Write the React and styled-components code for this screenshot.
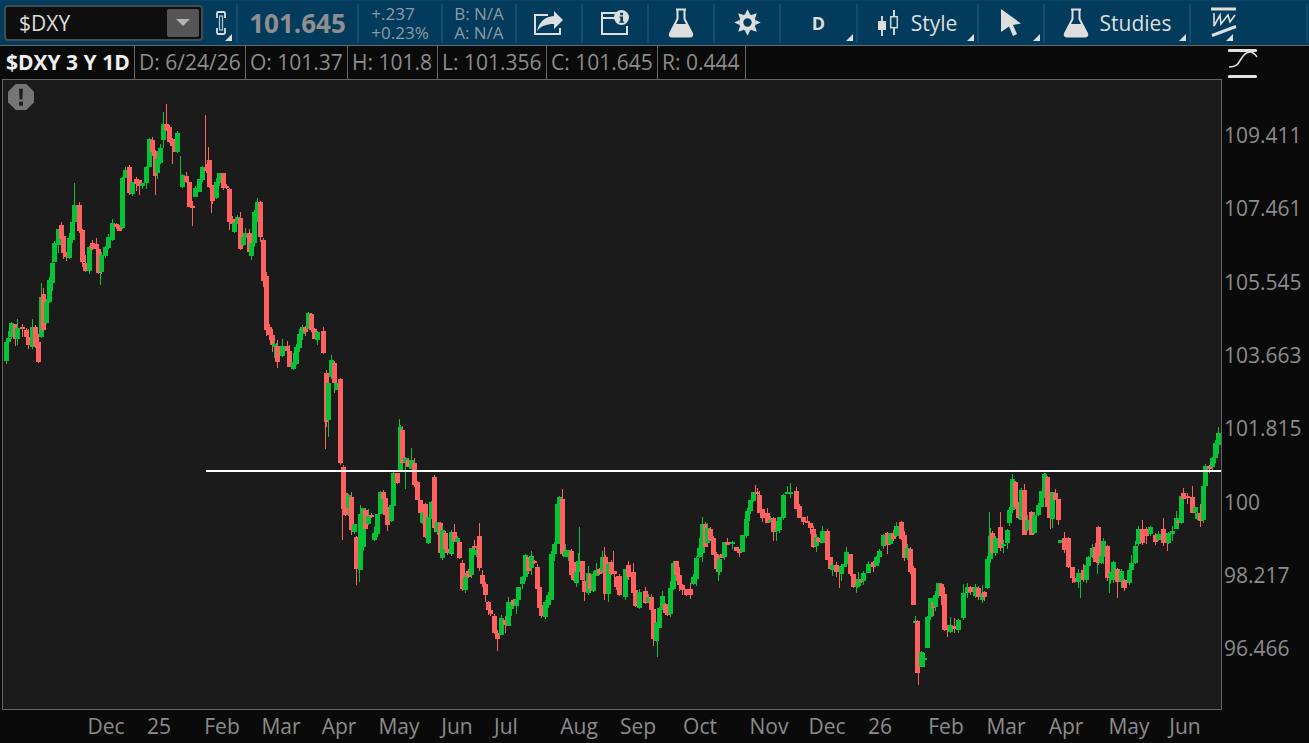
import React from 'react'
import styled, { createGlobalStyle } from 'styled-components'

const GlobalStyle = createGlobalStyle`
    html, body { margin:0; padding:0; background:#0a0a0a; }
    body { font-family:"Open Sans", "Noto Sans", sans-serif; overflow:hidden; }
`

const Page = styled.div`
    width:1309px;
    height:743px;
    display:flex;
    flex-direction:column;
    background:#0a0a0a;
    overflow:hidden;
`

const Toolbar = styled.div`
    display:flex;
    box-sizing:border-box;
    flex:none;
    padding:3px 0 2px;
    background:#023b5c;
    border-top:1px solid #084564;
    border-bottom:1px solid #6a6a6a;
    height:46px;
`

const ToolCell = styled.div`
    position:relative;
    flex:none;
    box-sizing:border-box;
    width:${p => p.$w}px;
    display:flex;
    align-items:center;
    justify-content:${p => p.$left ? 'flex-start' : 'center'};
    gap:${p => p.$gap || 0}px;
    padding-left:${p => p.$pl || 0}px;
    padding-bottom:2px;
    border-right:2px solid #0f4d72;
    color:#dedede;
    font-size:21px;
    line-height:24px;
    ${p => p.$corner && `
        &::after {
            content:'';
            position:absolute;
            right:${p.$cr || 3}px;
            bottom:2px;
            border-style:solid;
            border-width:0 0 7px 7px;
            border-color:transparent transparent #dedede transparent;
        }
    `}
`

const SymbolBox = styled.div`
    width:199px;
    height:36px;
    margin-left:4px;
    box-sizing:border-box;
    display:flex;
    align-items:center;
    justify-content:space-between;
    padding:2px 2px 2px 13px;
    background:#0e0e0e;
    border:2px solid #414b52;
    border-radius:4px;
    color:#dcdcdc;
    font-size:21px;
`

const DropButton = styled.div`
    width:32px;
    height:28px;
    display:flex;
    align-items:center;
    justify-content:center;
    background:#555;
    border-radius:2px;
    &::after {
        content:'';
        border-style:solid;
        border-width:7px 7px 0 7px;
        border-color:#b4b4b4 transparent transparent transparent;
    }
`

const LinkSlot = styled.div`
    margin-left:13px;
    display:flex;
`

const LastPrice = styled.div`
    font-size:26px;
    font-weight:700;
    color:#8f8f8f;
`

const TwoLine = styled.div`
    display:flex;
    flex-direction:column;
    font-size:17px;
    line-height:19px;
    color:#8c9aa3;
`

const DayLetter = styled.span`
    font-size:18px;
    font-weight:700;
`

const InfoBar = styled.div`
    display:flex;
    height:34px;
    flex:none;
    box-sizing:border-box;
    border-bottom:1px solid #666;
    background:#0a0a0a;
`

const InfoCell = styled.div`
    flex:none;
    box-sizing:border-box;
    width:${p => p.$w}px;
    padding-left:4px;
    border-right:1px solid #666;
    font-size:21px;
    line-height:33px;
    white-space:nowrap;
    font-weight:${p => p.$title ? 700 : 400};
    color:${p => p.$title ? '#efefef' : '#8c8c8c'};
`

const Main = styled.div`
    display:flex;
    flex:1;
    min-height:0;
`

const LeftColumn = styled.div`
    width:1220px;
    margin-left:2px;
    display:flex;
    flex-direction:column;
    flex:none;
`

const ChartPanel = styled.div`
    position:relative;
    height:630px;
    flex:none;
    box-sizing:border-box;
    background:#1b1b1b;
    border-left:1px solid #666;
    border-right:1px solid #666;
    border-bottom:1px solid #666;
`

const ChartSvg = styled.svg`
    display:block;
    width:1218px;
    height:629px;
`

const AlertBadge = styled.div`
    position:absolute;
    left:5px;
    top:4px;
    display:flex;
`

const DateAxis = styled.div`
    display:flex;
    flex:1;
    align-items:center;
    padding-bottom:1px;
`

// zero width so the label stays centred on its tick, whatever its text
const DateLabel = styled.span`
    flex:none;
    width:0;
    margin-left:${p => p.$gap}px;
    display:flex;
    justify-content:center;
    white-space:nowrap;
    font-size:21px;
    color:#8c8c8c;
`

const PriceAxis = styled.div`
    flex:1;
    display:flex;
    flex-direction:column;
`

const ScaleSlot = styled.div`
    height:53px;
    padding:2px 0 0 6px;
    box-sizing:border-box;
`

const PriceLabel = styled.div`
    height:73.330px;
    line-height:73.330px;
    padding-left:2px;
    font-size:21px;
    color:#8c8c8c;
`

// candles traced from the picture: g/r, x, body top, body bottom
const CANDLES = `g6,342,361 g8,338,342 g11,323,337 r15,324,339 g17,328,339 r22,327,329 r26,330,337 r28,337,345 g32,327,347 r35,327,346 r38,342,362
g41,297,337 r43,294,330 g46,302,323 g49,280,302 g52,263,283 g54,243,262 g58,229,245 r61,225,239 r63,236,253 r66,252,257 g69,238,258 g72,222,240 g74,205,222
r79,205,231 r82,230,262 r85,263,271 g89,247,271 r92,243,249 r96,244,249 r98,249,273 g101,255,272 g105,247,256 g108,237,248 g112,223,240 r116,224,227 r119,226,231
g122,178,228 g125,170,178 r129,167,193 g132,182,194 r136,179,184 r139,180,186 g142,183,186 g146,167,183 g149,139,167 r152,140,152 r155,151,176 g157,159,173 g160,148,163
g163,124,140 r166,124,130 r169,127,142 r172,139,146 r174,140,152 g177,133,152 g182,175,187 r186,176,182 r189,182,207 r192,206,208 g195,188,197 g199,179,192 g202,167,180
r206,168,171 r209,160,187 r212,185,201 g216,182,198 g219,173,183 r223,173,188 r226,186,188 r229,189,222 r232,219,224 g234,223,232 g237,217,223 r240,218,249 g243,237,245 g245,233,238
r249,233,252 g251,243,256 g254,212,243 g257,202,217 r260,202,237 r263,240,281 r266,276,330 r269,327,335 r272,335,345 g274,344,347 g276,347,358 r277,346,362 g282,346,356 r287,346,351
r289,351,367 g293,362,369 g296,347,364 g299,334,348 g302,327,334 r305,327,332 g308,313,329 r311,314,330 r314,329,339 g317,332,340 r323,331,353
r326,373,422 g328,383,420 g331,360,377 r334,363,383 g336,383,390 r340,379,463 r343,467,509 r345,493,515 g348,495,508 r351,497,530 g354,524,532 r356,537,569 g360,514,570 g363,508,547
r365,510,529 g368,516,524 r371,515,517 g374,533,540 g377,514,534 g380,492,514 r383,492,499 r385,498,515 r387,507,525 g391,505,521 g393,473,506 r397,473,483 g400,427,470 r402,430,463
g405,458,462 r408,460,467 g411,460,469 r414,463,485 r417,482,500 r420,500,513 g422,513,523 r425,504,537 g428,517,543 g431,502,517 r434,477,528 g437,522,532 r440,523,553 g442,530,558
r445,533,549 r447,549,553 g451,532,554 r454,532,541 g457,538,542 r459,542,558 r462,563,589 g465,577,590 r468,571,577 g471,548,575 r474,546,548 g476,550,555 r479,536,568 r482,575,584
r485,584,595 r488,602,610 r490,610,614 r494,616,633 r497,633,639 g501,618,635 r505,620,625 g508,602,626 g511,605,609 r513,600,605 g516,599,606 g518,587,600 g522,577,584 g525,555,577
r528,557,571 g531,556,568 r534,561,563 r537,567,589 r539,587,608 r541,605,616 g545,602,617 g548,595,605 g551,554,600 g554,544,554 g557,504,544 g559,497,508 r562,499,554 g565,551,557
g568,550,556 r571,551,575 r573,562,580 g576,572,583 g578,561,572 r582,561,580 r584,581,592 g588,573,593 r590,574,589 g593,574,591 g596,570,576 r599,569,574 g602,557,572 r605,557,594
g608,564,594 r611,562,574 r614,571,574 r616,577,587 r619,576,595 g625,569,597 r628,565,577 r633,572,593 r635,590,606 g639,592,608 r645,591,603 g648,597,602 r651,597,610 r653,609,639
g656,623,641 g659,608,628 g662,596,608 r665,604,613 r667,612,615 g670,588,614 g673,563,589 r676,561,575 r679,575,585 r682,585,590 r686,589,595 r690,589,595 g693,577,584 g696,558,579
g699,548,557 g702,524,553 r705,524,547 g707,528,543 r710,529,540 r713,538,555 r716,554,569 g719,559,572 r722,554,558 g724,542,557 r727,542,545 g732,542,544 r736,547,551 r739,551,553
g742,535,552 g746,519,536 g747,511,521 g750,500,511 g753,492,501 r757,492,493 r759,495,513 r762,509,518 r767,513,523 g770,520,522 r773,518,532 g776,529,531 g779,517,530 g783,495,518
g787,492,494 g790,492,494 r796,491,509 r799,506,518 r803,517,522 r807,521,523 r810,523,528 r813,529,547 g816,537,546 r818,538,542 g822,531,543 r827,531,560 r830,557,569 g832,565,570
r836,565,572 g841,566,574 g843,564,567 g846,552,564 r850,554,574 r853,574,587 g857,584,587 g858,579,586 r861,580,582 g863,573,581 g868,564,573 r873,562,567 g876,557,566 g879,551,557
g883,535,546 r887,533,545 g890,533,544 r893,533,539 g896,526,536 r901,522,539 r904,535,558 g907,548,558 r910,549,572 r913,568,605 g915,621,623 r917,621,673 g921,652,667 g924,658,660
g927,617,648 g930,598,617 r933,602,608 g935,595,607 g938,583,596 r941,584,596 r944,594,630 r947,625,630 g950,625,632 r954,626,629 g958,620,630 g963,593,618 g967,587,593 r970,587,592
g975,587,596 r978,588,597 g982,593,600 r984,592,597 g987,559,588 g990,536,559 r992,533,553 g995,538,553 r1000,527,548 g1003,544,546 g1007,530,543 g1009,510,523 g1012,479,510 r1015,482,507
r1018,505,518 g1021,490,520 r1024,490,535 g1027,520,530 r1031,512,535 g1034,515,533 g1038,505,515 g1041,491,507 g1044,474,498 r1047,477,507 r1049,507,518 g1052,492,519 r1055,493,500 r1058,499,520
g1060,540,543 r1064,538,550 r1068,538,567 r1072,567,578 r1074,578,582 g1078,573,582 r1083,570,580 g1086,565,580 g1088,557,566 g1092,548,557 r1095,547,562 r1098,527,563 g1101,556,563
g1103,541,557 r1107,546,578 g1110,573,577 g1113,562,580 r1117,569,582 g1121,571,582 r1124,580,588 g1129,570,583 g1131,563,570 g1135,546,563 g1138,529,544 r1142,529,543 r1146,529,536
g1150,527,534 r1155,535,542 g1158,534,540 r1163,529,543 g1168,533,543 g1172,531,534 g1176,518,529 r1178,521,523 g1181,496,523 r1183,493,499 r1187,496,498 r1192,497,513 g1195,507,512
g1197,513,519 r1200,513,521 g1203,486,520 g1205,466,486 r1209,466,469 g1212,458,467 g1215,443,458 g1218,433,445`
    .split(/\s+/)
    .map(s => {
        const [x, top, bottom] = s.slice(1).split(',').map(Number)
        return { up: s[0] === 'g', x, top, bottom }
    })

// the wicks that stand out: g/r, x, from, to
const LONG_WICKS = `g74,183,205 r166,104,124 r205,115,170 r208,147,165 g163,112,125 g180,156,176 g41,283,300 r192,205,226 g100,272,285 r155,176,195 r172,146,164 r211,200,213
g399,419,430 r325,420,449 g328,420,437 r342,500,540 r356,565,585 g359,565,582 r497,635,651 g579,527,565 r562,489,500 r479,523,537 g405,458,489 g411,448,462
g657,635,657 r918,670,685 g702,517,526 r755,485,495 g790,483,495 g718,570,581 r773,530,541 g776,530,541 r839,570,588 g856,585,593 r604,547,600 r613,551,565 g699,538,550
g989,512,545 r1000,512,530 g1003,545,553 r1050,515,529 g1080,580,598 g1109,575,593 r1117,580,598 g1097,560,574 r1167,540,551 r1163,518,532 r1192,486,500 g1218,427,436 g1045,473,476`
    .split(/\s+/)
    .map(s => {
        const [x, from, to] = s.slice(1).split(',').map(Number)
        return { up: s[0] === 'g', x, from, to }
    })

const wiggle = i => {
    const v = Math.sin(i * 127.1 + 11.7) * 43758.5453
    return v - Math.floor(v)
}

const GREEN = '#05c236'
const RED = '#ff6161'

const Candles = () => <ChartSvg viewBox="3 80 1218 629" shapeRendering="crispEdges">
    {LONG_WICKS.map((w, i) => <rect key={i} x={w.x} y={w.from} width="1" height={w.to - w.from} fill={w.up ? GREEN : RED} />)}
    {CANDLES.map((c, i) => {
        const up = Math.round(wiggle(i) * wiggle(i + 3) * 11)
        const down = Math.round(wiggle(i + 7) * wiggle(i + 9) * 11)
        const color = c.up ? GREEN : RED
        return <g key={c.x}>
            <rect x={c.x} y={c.top - up} width="1" height={c.bottom - c.top + up + down} fill={color} />
            <rect x={c.x - 2} y={c.top} width="5" height={Math.max(c.bottom - c.top, 2)} fill={color} />
        </g>
    })}
    <rect x="206" y="470" width="1016" height="2" fill="#fff" />
</ChartSvg>

const LinkIcon = () => <svg width="10" height="24" viewBox="0 0 10 24" fill="none" stroke="#dedede" strokeWidth="1.800">
    <path d="M1 7V2.200C1 1.500 1.500 1 2.200 1h5.600C8.500 1 9 1.500 9 2.200V7M1 17v4.800c0 .7.5 1.200 1.200 1.200h5.600c.7 0 1.200-.5 1.200-1.200V17" />
    <rect x="3.500" y="5" width="3" height="14" strokeWidth="1.200" stroke="#b9c6cf" />
</svg>

const ShareIcon = () => <svg width="30" height="24" viewBox="0 0 30 24">
    <path d="M14 4H1v19h25v-6" fill="none" stroke="#dedede" strokeWidth="2" />
    <path d="M20 0L29 9 20 18V13C12 13 7 15 3 20 5 11 11 5.500 20 5z" fill="#dedede" />
</svg>

const WindowInfoIcon = () => <svg width="28" height="25" viewBox="0 0 28 25">
    <path d="M17 3H1v21h25v-8M1 8h13" fill="none" stroke="#dedede" strokeWidth="2" />
    <circle cx="20.500" cy="7.500" r="7.500" fill="#dedede" />
    <path d="M19.200 2.800h2.800v2.400h-2.800zM18.500 6.500h3.500v5h1.200v1.300h-5v-1.300h1.200V7.800h-.9z" fill="#023b5c" />
</svg>

const FlaskIcon = () => <svg width="26" height="30" viewBox="0 0 26 30">
    <path d="M8 1.500h10M9.500 2v9L2 25.500c-.8 1.600.2 3 2 3h18c1.800 0 2.800-1.400 2-3L16.500 11V2" fill="none" stroke="#dedede" strokeWidth="2" />
    <path d="M7 16h12l5 10c.8 1.700 0 3-2 3H4c-2 0-2.800-1.300-2-3z" fill="#dedede" />
</svg>

const GearIcon = () => <svg width="27" height="27" viewBox="-13.500 -13.500 27 27">
    {[0, 45, 90, 135, 180, 225, 270, 315].map(a => <path key={a} d="M-2.600-8L0-13.200 2.600-8z" fill="#dedede" transform={`rotate(${a})`} />)}
    <circle r="6.300" fill="none" stroke="#dedede" strokeWidth="4.200" />
</svg>

const CandleIcon = () => <svg width="21" height="26" viewBox="0 0 21 26" stroke="#cfd4d7" fill="none">
    <path d="M4 6v20M16 0v25" strokeWidth="2" />
    <rect x="0" y="11" width="8" height="9" fill="#dedede" stroke="none" />
    <rect x="12.700" y="6.700" width="6.600" height="11" fill="#023b5c" strokeWidth="1.500" />
</svg>

const CursorIcon = () => <svg width="22" height="27" viewBox="0 0 22 27">
    <path d="M1 0L21 14.500 13 16 17 25 13 27 9 17.500 1 23z" fill="#dedede" />
</svg>

const DrawingIcon = () => <svg width="27" height="31" viewBox="0 0 27 31" fill="none" stroke="#dedede">
    <path d="M0 2h25" strokeWidth="3" />
    <path d="M3 6V19L9 8l1 9 7-9 2 7 5-7" strokeWidth="1.600" />
    <path d="M1 28.500l24-9" strokeWidth="3" />
</svg>

const ScaleIcon = () => <svg width="30" height="31" viewBox="0 0 30 31" fill="none" stroke="#e2e2e2">
    <path d="M1.500 2.500h26M1.500 28.500h26" strokeWidth="3.200" strokeLinecap="round" />
    <path d="M1 19c8 0 9-3 12-8s6-7 9-7 5 2 7 5" strokeWidth="1.500" />
</svg>

const AlertIcon = () => <svg width="26" height="26" viewBox="0 0 27 27">
    <path d="M8 0h11l8 8v11l-8 8H8l-8-8V8z" fill="#757575" />
    <path d="M11.500 5h4l-.6 11h-2.800zM11.500 18.500h4v4h-4z" fill="#1b1b1b" />
</svg>

const DATES = [['Dec', 106], ['25', 159], ['Feb', 222], ['Mar', 281], ['Apr', 339], ['May', 399], ['Jun', 457], ['Jul', 506], ['Aug', 579], ['Sep', 638],
    ['Oct', 700], ['Nov', 769], ['Dec', 827], ['26', 880], ['Feb', 946], ['Mar', 1006], ['Apr', 1066], ['May', 1129], ['Jun', 1185]]

const PRICES = ['109.411', '107.461', '105.545', '103.663', '101.815', '100', '98.217', '96.466']

const INFO = [['D: 6/24/26', 111], ['O: 101.37', 102], ['H: 101.8', 90], ['L: 101.356', 109], ['C: 101.645', 111], ['R: 0.444', 88]]

export default function App() {
    return <Page>
        <GlobalStyle />
        <Toolbar>
            <ToolCell $w={238} $left $corner $cr={4}>
                <SymbolBox>$DXY<DropButton /></SymbolBox>
                <LinkSlot><LinkIcon /></LinkSlot>
            </ToolCell>
            <ToolCell $w={121}><LastPrice>101.645</LastPrice></ToolCell>
            <ToolCell $w={84}><TwoLine><span>+.237</span><span>+0.23%</span></TwoLine></ToolCell>
            <ToolCell $w={74}><TwoLine><span>B: N/A</span><span>A: N/A</span></TwoLine></ToolCell>
            <ToolCell $w={66}><ShareIcon /></ToolCell>
            <ToolCell $w={66}><WindowInfoIcon /></ToolCell>
            <ToolCell $w={66}><FlaskIcon /></ToolCell>
            <ToolCell $w={66}><GearIcon /></ToolCell>
            <ToolCell $w={77} $corner><DayLetter>D</DayLetter></ToolCell>
            <ToolCell $w={121} $corner $gap={12}><CandleIcon />Style</ToolCell>
            <ToolCell $w={66} $corner><CursorIcon /></ToolCell>
            <ToolCell $w={146} $corner $gap={11}><FlaskIcon />Studies</ToolCell>
            <ToolCell $w={117} $left $pl={20} $corner $cr={73}><DrawingIcon /></ToolCell>
        </Toolbar>
        <Main>
            <LeftColumn>
                <InfoBar>
                    <InfoCell $title $w={133}>$DXY 3 Y 1D</InfoCell>
                    {INFO.map(([text, width]) => <InfoCell key={text} $w={width}>{text}</InfoCell>)}
                </InfoBar>
                <ChartPanel>
                    <Candles />
                    <AlertBadge><AlertIcon /></AlertBadge>
                </ChartPanel>
                <DateAxis>
                    {DATES.map(([label, center], i) => <DateLabel key={i} $gap={center - (i === 0 ? 2 : DATES[i - 1][1])}>{label}</DateLabel>)}
                </DateAxis>
            </LeftColumn>
            <PriceAxis>
                <ScaleSlot><ScaleIcon /></ScaleSlot>
                {PRICES.map(p => <PriceLabel key={p}>{p}</PriceLabel>)}
            </PriceAxis>
        </Main>
    </Page>
}
